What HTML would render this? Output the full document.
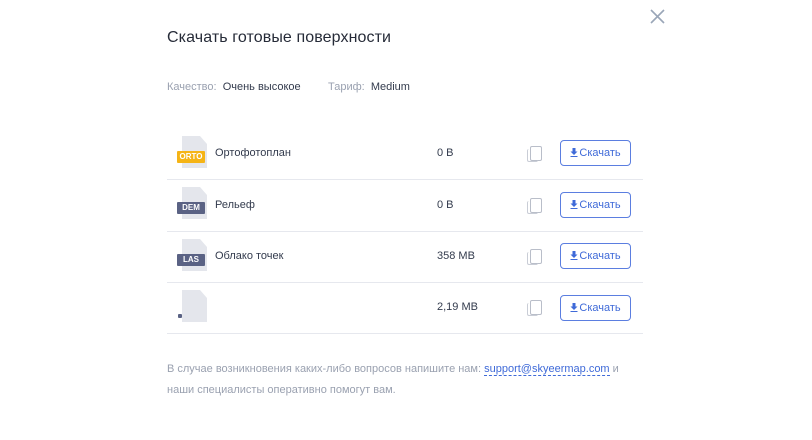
<!DOCTYPE html>
<html><head><meta charset="utf-8"><style>
body{margin:0;width:812px;height:440px;background:#fff;font-family:"Liberation Sans",sans-serif;position:relative;overflow:hidden;color:#333b4d}
.a{position:absolute}
h1{position:absolute;left:167px;top:29px;margin:0;font-size:16px;font-weight:normal;color:#262b38;letter-spacing:0.1px}
.meta{top:81px;font-size:11px}
.g{color:#9aa1b0}
.line{position:absolute;left:167px;width:476px;height:1px;background:#e6e8ee}
.doc{position:absolute;left:182px;width:25px;height:32px;background:#e4e6ec;clip-path:polygon(0 0,72% 0,100% 25%,100% 100%,0 100%)}
.tag{position:absolute;left:177px;height:12px;font-size:8px;font-weight:bold;color:#fff;line-height:12px;text-align:center;width:28px;border-radius:1px}
.name{position:absolute;left:215px;font-size:11px}
.size{position:absolute;left:437px;font-size:11px}
.copy{position:absolute;left:530px;width:10px;height:13px;border:1.5px solid #b9bec9;border-radius:2px;background:#fff}
.copy:before{content:"";position:absolute;left:-4px;top:2px;width:10px;height:12px;border-left:1.5px solid #c9cdd6;border-bottom:1.5px solid #c9cdd6;border-radius:2px}
.btn{position:absolute;left:560px;width:71px;height:26px;border:1px solid #5b7ee0;border-radius:4px;color:#3f6ad8;font-size:11px;line-height:24px;text-align:center;box-sizing:border-box}
.btn svg{vertical-align:-1px;margin-right:1px}
.foot{left:167px;top:359px;font-size:11px;color:#9aa1b0;line-height:21px}
</style></head><body>
<svg class="a" style="left:650px;top:9px" width="15" height="15" viewBox="0 0 15 15"><path d="M1 1L14 14M14 1L1 14" stroke="#9aa6b8" stroke-width="1.6"/></svg>
<h1>Скачать готовые поверхности</h1>
<div class="a meta" style="left:167px"><span class="g">Качество:</span>&nbsp; Очень высокое</div>
<div class="a meta" style="left:328px"><span class="g">Тариф:</span>&nbsp; Medium</div>

<div class="doc" style="top:136px"></div><div class="tag" style="top:151px;background:#f5b416">ORTO</div>
<div class="name" style="top:147px">Ортофотоплан</div><div class="size" style="top:147px">0 B</div>
<div class="copy" style="top:146px"></div><div class="btn" style="top:140px"><svg width="8" height="9" viewBox="0 0 8 9"><path d="M2.5 0h3v3.5h2L4 7 0.5 3.5h2z M0.5 8h7v1h-7z" fill="#3f6ad8"/></svg>Скачать</div>
<div class="line" style="top:179px"></div>

<div class="doc" style="top:187px"></div><div class="tag" style="top:202px;background:#5a6284">DEM</div>
<div class="name" style="top:199px">Рельеф</div><div class="size" style="top:199px">0 B</div>
<div class="copy" style="top:198px"></div><div class="btn" style="top:192px"><svg width="8" height="9" viewBox="0 0 8 9"><path d="M2.5 0h3v3.5h2L4 7 0.5 3.5h2z M0.5 8h7v1h-7z" fill="#3f6ad8"/></svg>Скачать</div>
<div class="line" style="top:231px"></div>

<div class="doc" style="top:239px"></div><div class="tag" style="top:254px;background:#5a6284">LAS</div>
<div class="name" style="top:250px">Облако точек</div><div class="size" style="top:250px">358 MB</div>
<div class="copy" style="top:249px"></div><div class="btn" style="top:243px"><svg width="8" height="9" viewBox="0 0 8 9"><path d="M2.5 0h3v3.5h2L4 7 0.5 3.5h2z M0.5 8h7v1h-7z" fill="#3f6ad8"/></svg>Скачать</div>
<div class="line" style="top:282px"></div>

<div class="doc" style="top:290px"></div><div class="a" style="left:178px;top:314px;width:4px;height:4px;background:#5a6284;border-radius:1px"></div>
<div class="size" style="top:301px">2,19 MB</div>
<div class="copy" style="top:300px"></div><div class="btn" style="top:295px"><svg width="8" height="9" viewBox="0 0 8 9"><path d="M2.5 0h3v3.5h2L4 7 0.5 3.5h2z M0.5 8h7v1h-7z" fill="#3f6ad8"/></svg>Скачать</div>
<div class="line" style="top:333px"></div>

<div class="a foot">В случае возникновения каких-либо вопросов напишите нам: <span style="color:#3f6ad8;border-bottom:1px dashed #3f6ad8">support@skyeermap.com</span> и<br>наши специалисты оперативно помогут вам.</div>
</body></html>
